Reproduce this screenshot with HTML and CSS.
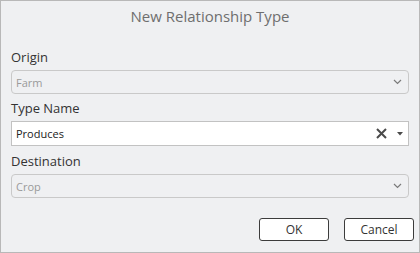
FILE: index.html
```html
<!DOCTYPE html>
<html lang="en">
<head>
    <meta charset="UTF-8">
    <title>New Relationship Type</title>
    <link rel="stylesheet" href="styles.css">
</head>
<body>
    <div class="dialog">
        <h1 class="title">New Relationship Type</h1>

        <div class="form-group">
            <label>Origin</label>
            <div class="combo disabled">
                <span class="value">Farm</span>
                <svg class="chevron" width="9" height="6" viewBox="0 0 9 6"><polyline points="1,1 4.5,4.5 8,1" fill="none" stroke="#7a7a7a" stroke-width="1.2"/></svg>
            </div>
        </div>

        <div class="form-group type-name">
            <label>Type Name</label>
            <div class="combo editable">
                <span class="value">Produces</span>
                <svg class="clear" width="11" height="11" viewBox="0 0 11 11"><path d="M1 1 L10 10 M10 1 L1 10" stroke="#4a4a4a" stroke-width="2"/></svg>
                <svg class="arrow" width="6" height="4" viewBox="0 0 6 4"><polygon points="0,0 6,0 3,3.5" fill="#4a4a4a"/></svg>
            </div>
        </div>

        <div class="form-group">
            <label>Destination</label>
            <div class="combo disabled">
                <span class="value">Crop</span>
                <svg class="chevron" width="9" height="6" viewBox="0 0 9 6"><polyline points="1,1 4.5,4.5 8,1" fill="none" stroke="#7a7a7a" stroke-width="1.2"/></svg>
            </div>
        </div>

        <div class="actions">
            <button class="button">OK</button>
            <button class="button">Cancel</button>
        </div>
    </div>
</body>
</html>
```

FILE: styles.css
```css
* {
    margin: 0;
    padding: 0;
    box-sizing: border-box;
    font-family: 'Open Sans', 'Noto Sans', sans-serif;
}

body {
    background-color: #eff0f2;
}

.dialog {
    width: 420px;
    height: 253px;
    border: 1px solid #b8b8b8;
    background: #eff0f2;
    padding: 0 10px;
}

.title {
    font-size: 15px;
    font-weight: normal;
    color: #6e6e6e;
    text-align: center;
    height: 47px;
    padding-top: 5px;
}

.form-group {
    margin-bottom: 5px;
}

.form-group label {
    display: block;
    font-size: 13px;
    line-height: 18px;
    color: #333;
    margin-bottom: 4px;
}

.combo {
    height: 24px;
    width: 398px;
    display: flex;
    align-items: center;
    padding: 0 6px 0 4px;
    font-size: 11px;
}

.combo .value {
    flex: 1;
}

.combo.disabled {
    border: 1px solid #c9c9c9;
    border-radius: 4px;
    color: #9a9a9a;
}

.combo.editable {
    height: 25px;
    background: white;
    border: 1px solid #c2c2c2;
    color: #222;
    padding-right: 5px;
}

.type-name {
    margin-bottom: 6px;
}

.clear {
    margin-right: 10px;
}

.actions {
    display: flex;
    justify-content: flex-end;
    gap: 15px;
    margin-top: 20px;
    margin-right: -5px;
}

.button {
    width: 70px;
    height: 23px;
    background: white;
    border: 1px solid #3c3c3c;
    border-radius: 3px;
    font-size: 12px;
    color: #333;
}
```
